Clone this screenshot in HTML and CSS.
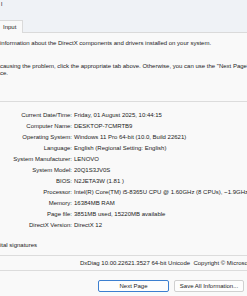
FILE: index.html
```html
<!DOCTYPE html>
<html>
<head>
    <meta name="viewport" content="width=device-width, initial-scale=1">
    <title>DxDiag</title>
    <link rel="stylesheet" href="styles.css">
</head>
<body>
    <div class="titlebar">l</div>

    <div class="tabs">
        <div class="tab">Input</div>
    </div>

    <div class="panel">
        <p class="intro">information about the DirectX components and drivers installed on your system.</p>
        <p class="intro second">causing the problem, click the appropriate tab above. Otherwise, you can use the "Next Page" button below to visit each page in sequen</p>
        <p class="intro third">ce.</p>

        <div class="group">
            <div class="row"><span class="label">Current Date/Time:</span><span class="value">Friday, 01 August 2025, 10:44:15</span></div>
            <div class="row"><span class="label">Computer Name:</span><span class="value">DESKTOP-7CMRTB9</span></div>
            <div class="row"><span class="label">Operating System:</span><span class="value">Windows 11 Pro 64-bit (10.0, Build 22621)</span></div>
            <div class="row"><span class="label">Language:</span><span class="value">English (Regional Setting: English)</span></div>
            <div class="row"><span class="label">System Manufacturer:</span><span class="value">LENOVO</span></div>
            <div class="row"><span class="label">System Model:</span><span class="value">20Q1S3JV0S</span></div>
            <div class="row"><span class="label">BIOS:</span><span class="value">N2JETA3W (1.81 )</span></div>
            <div class="row"><span class="label">Processor:</span><span class="value">Intel(R) Core(TM) i5-8365U CPU @ 1.60GHz (8 CPUs), ~1.9GHz</span></div>
            <div class="row"><span class="label">Memory:</span><span class="value">16384MB RAM</span></div>
            <div class="row"><span class="label">Page file:</span><span class="value">3851MB used, 15220MB available</span></div>
            <div class="row"><span class="label">DirectX Version:</span><span class="value">DirectX 12</span></div>
        </div>

        <p class="check">ital signatures</p>

        <div class="version">DxDiag 10.00.22621.3527 64-bit Unicode &nbsp;Copyright &copy; Microsoft. All rights reserved.</div>
    </div>

    <div class="buttons">
        <button class="btn default">Next Page</button>
        <button class="btn">Save All Information...</button>
    </div>
</body>
</html>
```

FILE: styles.css
```css
body {
    margin: 0;
    width: 247px;
    height: 296px;
    overflow: hidden;
    font-family: "Liberation Sans", Arial, sans-serif;
    font-size: 6px;
    color: #1b1b1b;
    background-color: #f9f9f9;
}

.titlebar {
    height: 16px;
    line-height: 9px;
    padding-left: 1px;
    background-color: #eff2f6;
    white-space: nowrap;
}

.tabs {
    height: 16px;
    display: flex;
    align-items: flex-end;
    background-color: #eff2f6;
    border-bottom: 1px solid #dadada;
}

.tab {
    width: 19px;
    height: 12px;
    line-height: 12px;
    padding-left: 3px;
    background-color: #f9f9f9;
    border-right: 1px solid #dadada;
    border-top: 1px solid #dadada;
    margin-bottom: -1px;
}

.panel {
    white-space: nowrap;
}

.intro {
    margin: 0;
    height: 11px;
    line-height: 11px;
}

.intro:first-child {
    margin-top: 5px;
}

.second {
    margin-top: 13px;
    height: 8px;
    line-height: 8px;
}

.third {
    height: 8px;
    line-height: 8px;
    margin-top: -1px;
}

.group {
    margin-top: 24px;
    border-top: 1px solid #dcdcdc;
    padding-top: 8px;
}

.row {
    display: flex;
    height: 11px;
    line-height: 11px;
}

.label {
    width: 72px;
    text-align: right;
    flex-shrink: 0;
}

.value {
    padding-left: 2px;
}

.check {
    margin: 9px 0 0 0;
    height: 11px;
    line-height: 11px;
}

.version {
    margin-top: 4px;
    border-top: 1px solid #dcdcdc;
    border-bottom: 1px solid #dcdcdc;
    height: 14px;
    line-height: 14px;
    padding-left: 80px;
}

.buttons {
    display: flex;
    gap: 5px;
    padding: 9px 0 0 98px;
}

.btn {
    font-family: "Liberation Sans", Arial, sans-serif;
    font-size: 6px;
    color: #1b1b1b;
    height: 12px;
    padding: 0;
    background-color: #fdfdfd;
    border: 1px solid #d0d0d0;
    border-radius: 2px;
}

.btn.default {
    width: 71px;
    border-color: #3c7fd0;
}

.btn:last-child {
    width: 70px;
}
```
